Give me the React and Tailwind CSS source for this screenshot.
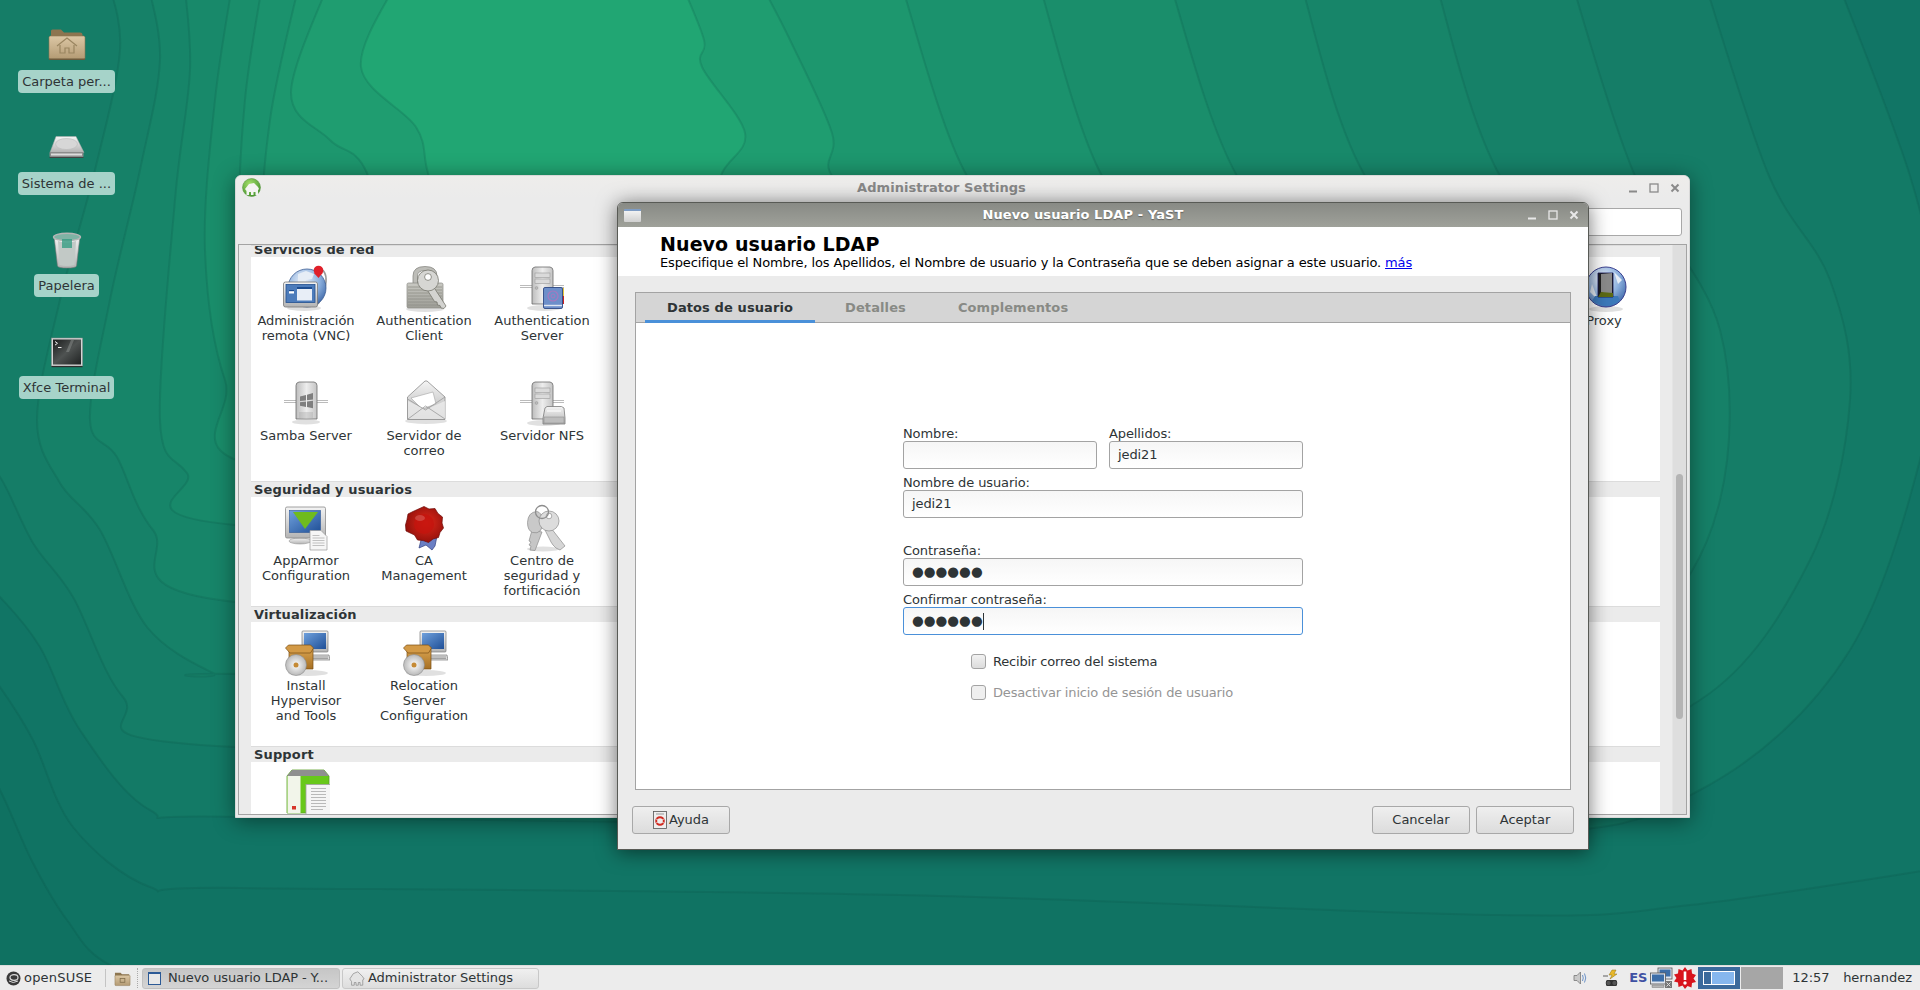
import React from "react";

/* ---------- wallpaper ---------- */
function smooth(pts) {
  let d = `M${pts[0][0]},${pts[0][1]}`;
  for (let i = 0; i < pts.length - 1; i++) {
    const p0 = pts[Math.max(0, i - 1)], p1 = pts[i], p2 = pts[i + 1], p3 = pts[Math.min(pts.length - 1, i + 2)];
    const c1 = [p1[0] + (p2[0] - p0[0]) / 6, p1[1] + (p2[1] - p0[1]) / 6];
    const c2 = [p2[0] - (p3[0] - p1[0]) / 6, p2[1] - (p3[1] - p1[1]) / 6];
    d += ` C${c1[0].toFixed(1)},${c1[1].toFixed(1)} ${c2[0].toFixed(1)},${c2[1].toFixed(1)} ${p2[0]},${p2[1]}`;
  }
  return d;
}
const layers = [
  { c: "#107363", tail: "L1960,-20 L-30,-20 Z", p: [[-30, 740], [0, 790], [33, 863], [67, 920], [110, 965], [220, 1000], [1960, 1000]] },
  { c: "#117565", tail: "L1960,-20 L-30,-20 Z", p: [[-30, 650], [0, 687], [33, 740], [73, 827], [150, 887], [240, 888], [900, 895], [1500, 915], [1690, 905], [1960, 865]] },
  { c: "#137a66", tail: "L-30,-20 Z", p: [[-30, 570], [0, 597], [40, 647], [80, 730], [150, 810], [240, 817], [900, 825], [1500, 835], [1700, 790], [1850, 650], [1930, 420], [1935, 300], [1910, 176], [1837, -20]] },
  { c: "#157d67", tail: "L-30,-20 Z", p: [[-30, 450], [0, 477], [33, 543], [73, 597], [123, 697], [200, 745], [900, 755], [1500, 760], [1700, 700], [1810, 560], [1850, 400], [1830, 280], [1769, 176], [1704, -20]] },
  { c: "#168168", tail: "Z", p: [[108, -20], [120, 50], [95, 170], [60, 300], [37, 420], [60, 483], [100, 530], [147, 627], [213, 673], [240, 674], [900, 680], [1500, 680], [1650, 620], [1720, 500], [1720, 330], [1635, 176], [1571, -20]] },
  { c: "#178569", tail: "Z", p: [[147, -20], [160, 60], [140, 170], [110, 300], [90, 420], [117, 457], [153, 530], [235, 602], [900, 610], [1450, 600], [1600, 500], [1630, 330], [1500, 176], [1435, -20]] },
  { c: "#18896a", tail: "Z", p: [[184, -20], [190, 70], [175, 200], [160, 420], [187, 473], [235, 525], [900, 540], [1400, 520], [1500, 330], [1365, 176], [1300, -20]] },
  { c: "#1a8e6b", tail: "Z", p: [[233, -20], [215, 100], [205, 250], [225, 380], [280, 470], [900, 470], [1300, 450], [1350, 300], [1237, 176], [1169, -20]] },
  { c: "#1b926d", tail: "Z", p: [[263, -20], [245, 100], [240, 230], [260, 330], [300, 420], [900, 420], [1200, 400], [1200, 280], [1102, 176], [1038, -20]] },
  { c: "#1d976e", tail: "Z", p: [[300, -20], [270, 120], [265, 240], [300, 350], [600, 380], [1000, 350], [1060, 260], [967, 176], [900, -20]] },
  { c: "#1f9d70", tail: "Z", p: [[330, -20], [291, 93], [330, 140], [367, 173], [400, 300], [800, 300], [900, 240], [832, 176], [832, 133], [790, 40], [759, -20]] },
  { c: "#21a673", tail: "Z", p: [[398, -20], [361, 67], [416, 127], [428, 173], [450, 240], [600, 260], [700, 230], [722, 173], [745, 133], [702, 67], [704, 40], [680, -20]] },
];
function Wallpaper() {
  return (
    <svg className="absolute inset-0" width="1920" height="990" viewBox="0 0 1920 990">
      <rect width="1920" height="990" fill="#0f7161" />
      {layers.map((l, i) => (
        <path key={i} d={smooth(l.p) + " " + l.tail} fill={l.c} stroke="#0a4f40" strokeOpacity="0.18" strokeWidth="2" />
      ))}
    </svg>
  );
}

/* ---------- shared gradients ---------- */
function Defs() {
  return (
    <svg className="absolute w-0 h-0">
      <defs>
        <linearGradient id="gGray" x1="0" y1="0" x2="0" y2="1"><stop offset="0" stopColor="#f4f4f4" /><stop offset="1" stopColor="#b4b4b4" /></linearGradient>
        <linearGradient id="gGrayH" x1="0" y1="0" x2="1" y2="0"><stop offset="0" stopColor="#bdbdbd" /><stop offset=".5" stopColor="#ededed" /><stop offset="1" stopColor="#c4c4c4" /></linearGradient>
        <linearGradient id="gLock" x1="0" y1="0" x2="0" y2="1"><stop offset="0" stopColor="#c9c9c3" /><stop offset="1" stopColor="#9d9d96" /></linearGradient>
        <linearGradient id="gScreen" x1="0" y1="0" x2="1" y2="1"><stop offset="0" stopColor="#6fa0dc" /><stop offset="1" stopColor="#1f4f97" /></linearGradient>
        <linearGradient id="gBox" x1="0" y1="0" x2="0" y2="1"><stop offset="0" stopColor="#d9a350" /><stop offset="1" stopColor="#a66f22" /></linearGradient>
        <linearGradient id="gFolder" x1="0" y1="0" x2="0" y2="1"><stop offset="0" stopColor="#dcc7a5" /><stop offset="1" stopColor="#b39a73" /></linearGradient>
        <radialGradient id="gGlobe" cx=".4" cy=".3" r=".8"><stop offset="0" stopColor="#eef3fa" /><stop offset=".55" stopColor="#8cb0de" /><stop offset="1" stopColor="#2f5a9d" /></radialGradient>
        <radialGradient id="gSeal" cx=".55" cy=".45" r=".6"><stop offset="0" stopColor="#e0281a" /><stop offset="1" stopColor="#8f0f0a" /></radialGradient>
        <radialGradient id="gCD" cx=".5" cy=".5" r=".5"><stop offset="0" stopColor="#fff" /><stop offset="1" stopColor="#b9b9b9" /></radialGradient>
        <linearGradient id="gTerm" x1="0" y1="0" x2="1" y2="1"><stop offset="0" stopColor="#1a1c1c" /><stop offset=".5" stopColor="#4f5352" /><stop offset="1" stopColor="#1f2222" /></linearGradient>
        <radialGradient id="gGreen" cx=".4" cy=".3" r=".8"><stop offset="0" stopColor="#a4de6a" /><stop offset="1" stopColor="#3f8f2a" /></radialGradient>
      </defs>
    </svg>
  );
}

/* ---------- 48px application icons ---------- */
const Ico = ({ children, s = 48, v = 48 }) => (
  <svg width={s} height={s} viewBox={`0 0 ${v} ${v}`} className="block shrink-0">{children}</svg>
);
const Shadow = ({ cx = 24, cy = 44, rx = 18, ry = 3 }) => <ellipse cx={cx} cy={cy} rx={rx} ry={ry} fill="#000" opacity=".12" />;

function Tower({ windows, bays = true }) {
  return (
    <g>
      <path d="M2 21.5h44M2 23.5h44" stroke="#bbb" strokeWidth="1" />
      <path d="M14 6.5q0-3 3-3.5h15q3 .5 3 3.5V40H14z" fill="url(#gGrayH)" stroke="#6b6b6b" strokeWidth=".8" />
      {bays && <rect x="17" y="9" width="15" height="4.5" fill="#dadada" stroke="#999" strokeWidth=".6" />}
      {bays && <rect x="17" y="15" width="15" height="4.5" fill="#dadada" stroke="#999" strokeWidth=".6" />}
      {bays && <circle cx="18.5" cy="24" r="1.4" fill="#bbb" stroke="#888" strokeWidth=".4" />}
      {windows && (
        <g fill="#7f7f7f">
          <path d="M18 17.5l6-1.5v5.5l-6 .6zM25 15.7l6-1.7v6.5l-6 .8zM18 23.2l6-.6v5.5l-6-1.3zM25 22.5l6-.8v7.6l-6-1.2z" />
          <path d="M18 33v6M20 33v6M22 33v6M24 33v6M26 33v6M28 33v6M30 33v6" stroke="#a5a5a5" strokeWidth=".7" />
        </g>
      )}
    </g>
  );
}
const IcVnc = () => (
  <Ico>
    <Shadow cx="22" cy="44" rx="17" />
    <path d="M36 4q9 2 8 14t-8 22" fill="none" stroke="#9a9a9a" strokeWidth="1.6" />
    <circle cx="25" cy="24" r="19" fill="url(#gGlobe)" stroke="#3c5d93" strokeWidth=".8" />
    <path d="M16 10l8-3 8 3-2 5-6 1-3 4-5-2zM30 22l6 2-2 7-4-2z" fill="#e6edf6" />
    <rect x="1.5" y="18" width="34" height="25" rx="2" fill="url(#gGray)" stroke="#777" strokeWidth=".8" />
    <rect x="4" y="20.5" width="29" height="18" fill="#4d7cbb" stroke="#23508f" strokeWidth=".8" />
    <rect x="15" y="23" width="15" height="13.5" fill="#e8eef7" />
    <rect x="15" y="23" width="15" height="2" fill="#1e4e92" />
    <rect x="7" y="26" width="5" height="3.5" fill="#fff" />
    <rect x="7" y="26" width="5" height="1.2" fill="#1e4e92" />
    <circle cx="36.5" cy="6.5" r="4.8" fill="#e0202a" />
    <path d="M32 9l4.5 5 4-5z" fill="#e0202a" />
  </Ico>
);
const IcLock = () => (
  <Ico>
    <Shadow cx="25" cy="45" rx="19" />
    <path d="M13 20V12q0-9.5 12-9.5T37 12v8h-4.5v-8q0-5.5-7.5-5.5T17.500 12v8z" fill="#bdbdb8" stroke="#8a8a85" strokeWidth=".8" />
    <rect x="7" y="19" width="36" height="25" rx="1.500" fill="url(#gLock)" stroke="#8a8a85" strokeWidth=".7" />
    <path d="M8 23h34M8 26h34M8 29h34M8 32h34M8 35h34M8 38h34M8 41h34" stroke="#8f8f89" strokeWidth=".8" />
    <path d="M33 22l13 20-2 2.500-3-.5-1-2.500-2.500-.5-.5-3-2.500-.5L26 24z" fill="#d3d3d0" stroke="#77776f" strokeWidth=".8" />
    <circle cx="28" cy="16.500" r="10.500" fill="#d6d6d3" stroke="#77776f" strokeWidth=".8" />
    <circle cx="28" cy="13" r="3.400" fill="#fff" stroke="#77776f" strokeWidth=".8" />
  </Ico>
);
const IcAuthSrv = () => (
  <Ico>
    <Shadow cx="26" cy="44" rx="17" />
    <Tower />
    <rect x="42" y="24" width="4" height="8" fill="#e5c43a" />
    <rect x="42" y="32" width="4" height="8" fill="#cc2222" />
    <rect x="25.500" y="23.500" width="19" height="21" rx="1.500" fill="#6d8fca" stroke="#2f4a85" strokeWidth=".9" />
    <path d="M26 41.500h18" stroke="#dfe6f2" strokeWidth="1.400" />
    <circle cx="35" cy="32" r="5" fill="none" stroke="#a878bf" strokeWidth="1.200" />
    <circle cx="35" cy="32" r="2" fill="none" stroke="#a878bf" strokeWidth="1" />
  </Ico>
);
const IcSamba = () => (
  <Ico>
    <Shadow cx="24" cy="43" rx="14" ry="2.500" />
    <Tower windows bays={false} />
  </Ico>
);
const IcMail = () => (
  <Ico>
    <Shadow cx="26" cy="42" rx="21" />
    <path d="M7.500 18L25 2l2 0 18 16v22.500H7.500z" fill="url(#gGray)" stroke="#8b8b8b" strokeWidth=".8" />
    <path d="M11 19l22-6 3 12-14 5z" fill="#fff" stroke="#a5a5a5" strokeWidth=".6" />
    <path d="M8 22l17.500 8.500L45 22v18H8z" fill="#ececec" opacity=".8" />
    <path d="M7.500 20l18 11 19.500-13" fill="none" stroke="#9a9a9a" strokeWidth=".8" />
    <path d="M8 40L25.500 27 45 40" fill="none" stroke="#9b9b9b" strokeWidth=".8" />
  </Ico>
);
const IcNfs = () => (
  <Ico>
    <Shadow cx="26" cy="44" rx="17" />
    <Tower />
    <path d="M27 29l2-1.500h14.500l2.500 1.500 1 10v6H25v-6z" fill="url(#gGray)" stroke="#7b7b7b" strokeWidth=".8" />
    <rect x="26" y="38" width="20" height="6" fill="#bdbdbd" stroke="#888" strokeWidth=".5" />
    <path d="M29 32h14" stroke="#fff" strokeWidth="1" />
  </Ico>
);
const IcAppArmor = () => (
  <Ico>
    <ellipse cx="18" cy="37" rx="11" ry="3" fill="url(#gGray)" stroke="#888" strokeWidth=".5" />
    <rect x="3.500" y="3" width="40" height="31" rx="1.500" fill="url(#gGray)" stroke="#8a8a8a" strokeWidth=".8" />
    <rect x="7.500" y="6.500" width="31" height="22" fill="url(#gScreen)" stroke="#2c5594" strokeWidth=".6" />
    <path d="M11 8h25L23 25z" fill="#6fbb1e" />
    <path d="M28 26.500h11l6 6V46H28z" fill="#f6f6f6" stroke="#999" strokeWidth=".7" />
    <path d="M30.500 34h12M30.500 36.500h12M30.500 39h12M30.500 41.500h12M30.500 31.500h7" stroke="#aaa" strokeWidth=".7" />
  </Ico>
);
const IcCA = () => (
  <Ico>
    <path d="M22 32l-3 12 7-3 6 5 3-4 2-10z" fill="#6a7fc4" stroke="#2f3f80" strokeWidth=".7" />
    <path d="M24 2.500l5 2.500 6-.5 3 5 4.500 3.500-.5 6 1.500 5-3.500 4.500-1.500 5-5.500 1.500-4.500 3.500-5.500-2-5.500-.5-3-5L6 27l-.5-6L7 15.500 8 10l5-2.500z" fill="url(#gSeal)" stroke="#6e0c08" strokeWidth=".7" />
    <circle cx="24" cy="20" r="10" fill="#c4140e" opacity=".8" />
    <ellipse cx="20" cy="14" rx="5" ry="3" fill="#fff" opacity=".18" />
  </Ico>
);
const IcKeys = () => (
  <Ico>
    <Shadow cx="25" cy="45" rx="16" ry="2.500" />
    <path d="M14 26l-3 11 2 1-2 3 2 1-1 4 5 .5L24 28z" fill="#c6c6c6" stroke="#8d8d8d" strokeWidth=".7" />
    <path d="M19 7.500q-9 .5-9.500 11 0 8 5 10 5 1.500 8-2 3-4 2-11-1-7-5.500-8z" fill="#c9c9c9" stroke="#8d8d8d" strokeWidth=".7" />
    <path d="M33 24l14 18-5 4-4-2-3-3-2-3-6-12z" fill="#d6d6d6" stroke="#8d8d8d" strokeWidth=".7" />
    <circle cx="31" cy="17" r="10" fill="#dcdcdc" stroke="#8d8d8d" strokeWidth=".7" />
    <circle cx="31" cy="12" r="2.800" fill="#fff" stroke="#8d8d8d" strokeWidth=".7" />
    <circle cx="24" cy="8" r="6.500" fill="none" stroke="#8d8d8d" strokeWidth="1.300" />
  </Ico>
);
const IcHyper = () => (
  <Ico>
    <Shadow cx="26" cy="44" rx="20" />
    <rect x="20" y="2" width="26" height="21" rx="1" fill="url(#gGray)" stroke="#7b7b7b" strokeWidth=".7" />
    <rect x="22" y="4" width="22" height="16" fill="url(#gScreen)" />
    <path d="M30 26h17l1 5H29z" fill="#dcdcdc" stroke="#7b7b7b" strokeWidth=".7" />
    <path d="M31 28h15M31 29.500h15" stroke="#888" strokeWidth=".7" />
    <path d="M7 20h24v20H7z" fill="url(#gBox)" stroke="#7a4e14" strokeWidth=".7" />
    <path d="M3.500 19l3-3h22l3 3-3 5H8z" fill="#d39a46" stroke="#7a4e14" strokeWidth=".7" />
    <circle cx="14" cy="36" r="10.500" fill="url(#gCD)" stroke="#8a8a8a" strokeWidth=".6" />
    <circle cx="14" cy="36" r="2.500" fill="#c58a35" />
  </Ico>
);
const IcSupport = () => (
  <Ico>
    <path d="M5 7l5-6h32l5 6v37H5z" fill="#68c81a" stroke="#5a9e27" strokeWidth=".8" />
    <path d="M5 7l5-6h32l5 6z" fill="#8f8f8f" />
    <rect x="5.500" y="7" width="13" height="37" fill="#f2f5ea" />
    <path d="M10 37h4v3.500h-4z" fill="#d7372b" />
    <rect x="24" y="15.500" width="24.500" height="30" fill="#f5f5f5" stroke="#a0a0a0" strokeWidth=".8" />
    <path d="M29 19.500h15M29 22.500h15M29 25.500h15M29 28.500h15M29 31.500h15M29 34.500h15M29 37.500h15M29 40.500h12" stroke="#aaa" strokeWidth=".8" />
  </Ico>
);
const IcProxy = () => (
  <Ico>
    <Shadow cx="26" cy="45" rx="17" />
    <circle cx="26" cy="23" r="20" fill="url(#gGlobe)" stroke="#3a3f8f" strokeWidth="1" />
    <path d="M18 36l-8-8 2-8zM34 8l8 8-4 4z" fill="#e6edf6" />
    <path d="M12 37q14 10 28 0l-2-5H15z" fill="#3c79ba" />
    <path d="M18 9h15v24H18z" fill="#202020" stroke="#101050" strokeWidth=".8" />
    <path d="M21 10l11-1v23l-11-4z" fill="#8a8a8a" />
    <path d="M18 33h15v-4l-12-1z" fill="#5d6a15" />
  </Ico>
);

/* ---------- desktop icons ---------- */
const DFolder = () => (
  <svg width="48" height="48" viewBox="0 0 48 48" className="block translate-y-[2px]">
    <path d="M8 10q0-1.500 1.500-1.500h8.500l3 3h16q2.500 0 2.500 2V20H8z" fill="#8d7550" />
    <path d="M7 15h34l1 1v21q0 1.500-2 1.500H8q-2 0-2-1.500V16z" fill="url(#gFolder)" stroke="#8d7550" strokeWidth=".6" />
    <path d="M14 25L24 17l10 8M17 24v8h5v-5h4v5h5v-8" fill="none" stroke="#9a8560" strokeWidth="1.200" />
    <rect x="6" y="37.500" width="36" height="1.500" fill="#6d5a3c" />
  </svg>
);
const DDisk = () => (
  <svg width="48" height="48" viewBox="0 0 48 48" className="block translate-y-[3px]">
    <path d="M13 12.500h20l8 16H7z" fill="url(#gGray)" stroke="#aaa" strokeWidth=".5" />
    <ellipse cx="23.500" cy="20" rx="11" ry="5.500" fill="#d7d7d7" stroke="#bbb" strokeWidth=".6" />
    <rect x="6.500" y="28" width="34" height="5" rx="1" fill="#8c8c8c" />
    <rect x="8" y="29.500" width="31" height="2" fill="#dcdcdc" />
    <rect x="6.500" y="33" width="34" height="1" fill="#444" />
  </svg>
);
const DTrash = () => (
  <svg width="48" height="48" viewBox="0 0 48 48" className="block translate-y-[4px]">
    <path d="M11 9l3.500 30q1 2 9.500 2t9.500-2L37 9z" fill="url(#gGray)" stroke="#777" strokeWidth=".6" />
    <path d="M15 14q9 3 18 0l-1.500 24q-7.500 2-15 0z" fill="#c2c9c6" />
    <ellipse cx="24" cy="10" rx="13.500" ry="3.800" fill="#7fb3a5" stroke="#b5b5b5" strokeWidth="1.400" />
    <rect x="19" y="12" width="10" height="9" fill="#2f9b80" opacity=".75" />
  </svg>
);
const DTerm = () => (
  <svg width="48" height="48" viewBox="0 0 48 48" className="block translate-y-[2px]">
    <rect x="8.500" y="11" width="31" height="28" fill="#d4d4d4" stroke="#8d8d8d" strokeWidth=".5" />
    <rect x="10" y="12.500" width="28" height="25" fill="url(#gTerm)" />
    <path d="M12 14.500l2.500 1.800-2.500 1.800M15 20.500h3.500" stroke="#eee" strokeWidth="1" fill="none" />
    <path d="M28 13l-5 12h3l5-12z" fill="#8b8f8d" opacity=".5" />
    <rect x="8.500" y="39" width="31" height="1.200" fill="#2d2d2d" />
  </svg>
);
function DesktopItem({ icon, label }) {
  return (
    <div className="h-[102px] flex flex-col items-center">
      <div className="h-[46px] mb-[4px] flex items-center justify-center">{icon}</div>
      <div className="h-[23px] px-[4px] flex items-center rounded-[4px] bg-[#a6d3c9] text-[13px] leading-none text-[#2e3436] whitespace-nowrap">{label}</div>
    </div>
  );
}

/* ---------- window controls ---------- */
const Controls = ({ color, gap }) => (
  <div className="flex items-center" style={{ gap }}>
    <svg width="10" height="10" viewBox="0 0 10 10"><rect x="1" y="7.500" width="8" height="2" fill={color} /></svg>
    <svg width="10" height="10" viewBox="0 0 10 10"><rect x="1" y="1" width="8" height="8" fill="none" stroke={color} strokeWidth="1.300" /></svg>
    <svg width="10" height="10" viewBox="0 0 10 10"><path d="M1.500 1.500l7 7M8.500 1.500l-7 7" stroke={color} strokeWidth="2" /></svg>
  </div>
);

/* ---------- admin settings ---------- */
const Item = ({ icon, lines, className = "" }) => (
  <div className={`flex flex-col items-center w-[110px] ${className}`}>
    <div className="h-[48px] flex justify-center">{icon}</div>
    <div className="mt-[1px] text-[13px] leading-[15px] text-center text-[#2e3436] whitespace-nowrap">
      {lines.map((t) => <div key={t}>{t}</div>)}
    </div>
  </div>
);
const Section = ({ title, h = 16, children, height }) => (
  <div className="shrink-0">
    <div className="border-t border-[#dcdcdc] flex items-end pl-[3px] bg-[#ebebeb] overflow-hidden" style={{ height: h }}>
      <span className="text-[13px] font-bold leading-[15px] tracking-[0.15px] text-[#2e3436] whitespace-nowrap">{title}</span>
    </div>
    <div className="bg-white pt-[7px] grid grid-cols-[repeat(12,110px)] gap-x-2 auto-rows-[115px] overflow-hidden" style={{ height }}>
      {children}
    </div>
  </div>
);
function AdminWindow() {
  return (
    <div className="absolute left-[235px] top-[175px] w-[1455px] h-[643px] bg-[#ebebeb] rounded-t-[6px] border border-[#d8d8d8] shadow-[0_3px_22px_rgba(0,0,0,0.45)] flex flex-col overflow-hidden">
      <div className="h-[68px] shrink-0 relative">
        <div className="h-[23px] flex items-center justify-between pl-[6px] pr-[9px] bg-gradient-to-b from-[#eeedeb] to-[#ebebeb]">
          <svg width="19" height="19" viewBox="0 0 19 19">
            <circle cx="9.500" cy="9.500" r="9" fill="url(#gGreen)" stroke="#4f8f33" strokeWidth=".5" />
            <path d="M3 11l4-5 5-1 4 4 1 2-1 1v5h-2.500v-3h-2v3H9v-3H7v3H4.500v-4z" fill="#f4f4f2" />
          </svg>
          <span className="mr-[6px] text-[13px] font-bold text-[#888888] tracking-[0.05px]">Administrator Settings</span>
          <Controls color="#8a8a8a" gap="11px" />
        </div>
        <div className="flex justify-end pr-[7px] mt-[9px]">
          <div className="w-[500px] h-[28px] bg-white border border-[#a8a8a8] rounded-[3px]" />
        </div>
      </div>
      <div className="mx-[2px] mb-[2px] flex-1 min-h-0 border border-[#a3a3a3] flex bg-[#ebebeb]">
        <div className="flex-1 min-w-0 pl-[12px] pr-[12px] flex flex-col overflow-hidden">
          <Section title="Servicios de red" h={12} height={224}>
            <Item icon={<IcVnc />} lines={["Administración", "remota (VNC)"]} />
            <Item icon={<IcLock />} lines={["Authentication", "Client"]} />
            <Item icon={<IcAuthSrv />} lines={["Authentication", "Server"]} />
            <Item icon={<IcProxy />} lines={["Proxy"]} className="col-start-12" />
            <Item icon={<IcSamba />} lines={["Samba Server"]} className="row-start-2" />
            <Item icon={<IcMail />} lines={["Servidor de", "correo"]} className="row-start-2" />
            <Item icon={<IcNfs />} lines={["Servidor NFS"]} className="row-start-2" />
          </Section>
          <Section title="Seguridad y usuarios" height={109}>
            <Item icon={<IcAppArmor />} lines={["AppArmor", "Configuration"]} />
            <Item icon={<IcCA />} lines={["CA", "Management"]} />
            <Item icon={<IcKeys />} lines={["Centro de", "seguridad y", "fortificación"]} />
          </Section>
          <Section title="Virtualización" height={124}>
            <Item icon={<IcHyper />} lines={["Install", "Hypervisor", "and Tools"]} />
            <Item icon={<IcHyper />} lines={["Relocation", "Server", "Configuration"]} />
          </Section>
          <Section title="Support" height={60}>
            <Item icon={<IcSupport />} lines={[""]} />
          </Section>
        </div>
        <div className="w-[14px] shrink-0 bg-[#dedede] border-l border-[#e4e4e4] relative">
          <div className="absolute left-[3px] top-[229px] w-[7px] h-[245px] rounded-full bg-[#b4b4b4]" />
        </div>
      </div>
    </div>
  );
}

/* ---------- dialog ---------- */
const Entry = ({ children, focus, className = "" }) => (
  <div className={`h-[28px] flex items-center px-[8px] rounded-[3px] border bg-gradient-to-b from-[#f6f6f6] to-white text-[13px] tracking-[-0.1px] text-[#2e3436] ${focus ? "border-[#4a90d9]" : "border-[#a3a3a3]"} ${className}`}>
    {children}
  </div>
);
const Lbl = ({ children, className = "" }) => (
  <div className={`h-[15px] text-[13px] leading-[15px] tracking-[-0.1px] text-[#2e3436] whitespace-nowrap ${className}`}>{children}</div>
);
const Dots = () => <span className="text-[13.5px] leading-none tracking-[0px]">●●●●●●</span>;
const Check = ({ children, disabled, className = "" }) => (
  <div className={`flex items-center h-[15px] pl-[68px] ${className}`}>
    <div className={`w-[15px] h-[15px] rounded-[3px] border border-[#a3a3a3] bg-gradient-to-b ${disabled ? "from-[#efefef] to-[#efefef]" : "from-[#f2f2f2] to-[#dcdcdc]"}`} />
    <span className={`ml-[7px] text-[13px] leading-[15px] tracking-[-0.17px] ${disabled ? "text-[#959595]" : "text-[#2e3436]"}`}>{children}</span>
  </div>
);
const Btn = ({ children, className = "" }) => (
  <div className={`h-[28px] w-[98px] flex items-center justify-center rounded-[3px] border border-[#a8a8a8] bg-gradient-to-b from-[#efefef] to-[#dcdcdc] text-[13px] text-[#2e3436] ${className}`}>{children}</div>
);
function Dialog() {
  return (
    <div className="absolute left-[617px] top-[202px] w-[972px] h-[648px] rounded-t-[6px] border border-[#585a55] bg-[#ebebeb] shadow-[0_2px_20px_rgba(0,0,0,0.55)] flex flex-col overflow-hidden">
      <div className="h-[24px] shrink-0 flex items-center justify-between pl-[6px] pr-[9px] bg-gradient-to-b from-[#888a85] to-[#9fa19a]">
        <div className="w-[17px] h-[13px] rounded-[1px] bg-gradient-to-b from-[#f2f2f2] to-[#d0d0d0] border-t-[2px] border-[#7e9cc4]" />
        <span className="mr-[2px] text-[13px] font-bold text-white tracking-[0.1px] [text-shadow:0_1px_1px_rgba(0,0,0,0.35)]">Nuevo usuario LDAP - YaST</span>
        <Controls color="#e8e8e8" gap="11px" />
      </div>
      <div className="h-[49px] shrink-0 bg-white pl-[42px] flex flex-col justify-start pt-[6px]">
        <div className="text-[19px] font-bold leading-[22px] text-black tracking-[0.1px]">Nuevo usuario LDAP</div>
        <div className="text-[13px] leading-[15px] tracking-[-0.13px] text-black whitespace-nowrap">
          Especifique el Nombre, los Apellidos, el Nombre de usuario y la Contraseña que se deben asignar a este usuario. <a className="text-[#0000ee] underline">más</a>
        </div>
      </div>
      <div className="mt-[16px] ml-[17px] mr-[17px] h-[498px] shrink-0 border border-[#a3a3a3] bg-white flex flex-col">
        <div className="h-[30px] shrink-0 bg-[#d5d5d5] border-b border-[#a3a3a3] flex pl-[9px] gap-[8px]">
          <div className="h-[30px] px-[22px] flex items-center border-b-[3px] border-[#4a90d9] pt-[3px] text-[13px] font-bold tracking-[0.1px] text-[#2e3436]">Datos de usuario</div>
          <div className="h-[30px] px-[22px] flex items-center text-[13px] font-bold tracking-[0.1px] text-[#888a85]">Detalles</div>
          <div className="h-[30px] px-[22px] flex items-center text-[13px] font-bold tracking-[0.1px] text-[#888a85]">Complementos</div>
        </div>
        <div className="w-[400px] mx-auto pt-[103px]">
          <div className="grid grid-cols-2 gap-x-[12px]">
            <div><Lbl>Nombre:</Lbl><Entry /></div>
            <div><Lbl>Apellidos:</Lbl><Entry>jedi21</Entry></div>
          </div>
          <Lbl className="mt-[6px]">Nombre de usuario:</Lbl>
          <Entry>jedi21</Entry>
          <Lbl className="mt-[25px]">Contraseña:</Lbl>
          <Entry><Dots /></Entry>
          <Lbl className="mt-[6px]">Confirmar contraseña:</Lbl>
          <Entry focus><Dots /><span className="w-px h-[17px] bg-[#2e3436]" /></Entry>
          <Check className="mt-[19px]">Recibir correo del sistema</Check>
          <Check disabled className="mt-[16px]">Desactivar inicio de sesión de usuario</Check>
        </div>
      </div>
      <div className="flex items-start justify-between px-[14px] pt-[16px]">
        <Btn className="gap-[2px]">
          <svg width="14" height="18" viewBox="0 0 14 18">
            <rect x=".5" y=".5" width="13" height="17" fill="#eee" stroke="#555" strokeWidth=".8" />
            <path d="M3 3h8" stroke="#999" />
            <circle cx="7" cy="10" r="3.800" fill="none" stroke="#d02a20" strokeWidth="2" />
            <path d="M3 8l8 4M11 8l-8 4" stroke="#eee" strokeWidth=".7" />
          </svg>
          <span>Ayuda</span>
        </Btn>
        <div className="flex gap-[6px]">
          <Btn>Cancelar</Btn>
          <Btn>Aceptar</Btn>
        </div>
      </div>
    </div>
  );
}

/* ---------- taskbar ---------- */
function TaskBar() {
  return (
    <div className="h-[25px] shrink-0 bg-[#ececec] border-t border-[#dcdcdc] flex items-center text-[13px] text-[#2e3436] relative">
      <div className="flex items-center pl-[6px] w-[105px]">
        <svg width="15" height="15" viewBox="0 0 15 15">
          <circle cx="7.500" cy="7.500" r="7" fill="#3a3a3a" />
          <ellipse cx="8" cy="6.500" rx="4" ry="2.800" fill="none" stroke="#ddd" strokeWidth="1.200" />
          <path d="M3 10q4 3 9 0" fill="none" stroke="#ddd" strokeWidth="1" />
        </svg>
        <span className="ml-[3px] tracking-[0.2px]">openSUSE</span>
      </div>
      <div className="w-px h-[18px] bg-[#c4c4c4]" />
      <svg className="ml-[8px]" width="17" height="17" viewBox="0 0 18 18">
        <path d="M1 3h6l1.500 1.500H16V7H1z" fill="#8d7550" />
        <rect x="1" y="5.500" width="16" height="11" rx="1" fill="url(#gFolder)" stroke="#8d7550" strokeWidth=".5" />
        <rect x="6.500" y="9" width="5" height="4" fill="none" stroke="#7d6a48" strokeWidth=".8" />
      </svg>
      <div className="ml-[6px] h-[20px] border-l border-dotted border-[#aaa]" />
      <div className="ml-[4px] w-[198px] h-[21px] flex items-center pl-[5px] rounded-[3px] border border-[#c0c0c0] bg-gradient-to-b from-[#c6c6c6] to-[#d4d4d4]">
        <div className="w-[13px] h-[13px] border border-[#2c5a96] border-t-[2px] bg-[#e8e8e8]" />
        <span className="ml-[7px] tracking-[-0.1px] whitespace-nowrap">Nuevo usuario LDAP - Y...</span>
      </div>
      <div className="ml-[2px] w-[197px] h-[21px] flex items-center pl-[5px] rounded-[3px] border border-[#c8c8c8] bg-gradient-to-b from-[#f0f0f0] to-[#dddddd]">
        <svg width="17" height="17" viewBox="0 0 19 19">
          <path d="M2 10l4-6 5-2 5 5 2 3-1.500 1v6h-3v-3h-2v3H9v-3H7v3H4v-4z" fill="#e4e4e4" stroke="#8a8a8a" strokeWidth=".8" />
        </svg>
        <span className="ml-[3px] tracking-[-0.05px] whitespace-nowrap">Administrator Settings</span>
      </div>
      <div className="flex-1" />
      <svg width="15" height="16" viewBox="0 0 15 16">
        <path d="M1 5.500h3l3.500-3.500v12L4 10.500H1z" fill="#c9c9c9" stroke="#777" strokeWidth=".8" />
        <path d="M9.500 5q1.500 3 0 6M11.500 3.500q2.500 4.500 0 9" fill="none" stroke="#6b92c7" strokeWidth="1" />
      </svg>
      <svg className="ml-[15px]" width="17" height="18" viewBox="0 0 17 18">
        <path d="M9 1L6 6h3L7 10l7-5h-3l2-4z" fill="#e8b82a" stroke="#8f7010" strokeWidth=".5" />
        <path d="M0 7h5" stroke="#777" strokeWidth="1.200" />
        <rect x="3" y="11" width="11" height="6" rx="1.500" fill="#333" />
        <circle cx="5.500" cy="14" r="2.500" fill="#555" stroke="#222" strokeWidth=".5" />
        <circle cx="11.500" cy="14" r="2.500" fill="#555" stroke="#222" strokeWidth=".5" />
      </svg>
      <span className="ml-[9px] w-[17px] text-[13px] font-bold text-[#3f51a3]">ES</span>
      <svg className="ml-[4px]" width="23" height="22" viewBox="0 0 23 22">
        <rect x="8" y="1" width="14" height="11" fill="#dfe5ee" stroke="#555" strokeWidth=".8" />
        <rect x="9.500" y="2.500" width="11" height="7" fill="#3d6ea8" />
        <rect x="0.500" y="6" width="15" height="11" fill="#dfe5ee" stroke="#555" strokeWidth=".8" />
        <rect x="2" y="7.500" width="12" height="7" fill="#3d6ea8" />
        <rect x="2" y="18" width="12" height="2.500" fill="#b5b5b5" stroke="#666" strokeWidth=".4" />
        <rect x="15" y="14" width="7" height="7" fill="#777" />
        <path d="M16.500 15.500l4 4M20.500 15.500l-4 4" stroke="#ddd" strokeWidth="1" />
      </svg>
      <svg className="ml-[1px]" width="22" height="22" viewBox="0 0 22 22">
        <path d="M11 0l2.500 3.500 4-1.500.5 4.500 4 1.500-2.500 3.500 2.500 3.500-4 1-.5 4.500-4-1.500L11 22l-2.500-3.500-4 1.500L4 15.500 0 14.500 2.500 11 0 7.500l4-1L4.500 2l4 1.500z" fill="#d8141c" />
        <rect x="9.700" y="4.500" width="2.600" height="8.500" fill="#fff" />
        <circle cx="11" cy="16" r="1.700" fill="#fff" />
      </svg>
      <div className="ml-[2px] w-[42px] h-[22px] bg-[#3b6a9c] flex items-center justify-center">
        <div className="w-[32px] h-[14px] border border-white flex">
          <div className="w-[7px] bg-[#3b6a9c]" />
          <div className="flex-1 bg-[#86b7ee] border-l border-white" />
        </div>
      </div>
      <div className="ml-[1px] w-[42px] h-[22px] bg-[#a6a6a6]" />
      <span className="ml-[9px] w-[35px] whitespace-nowrap">12:57</span>
      <span className="ml-[16px] mr-[8px] whitespace-nowrap">hernandez</span>
    </div>
  );
}

export default function App() {
  return (
    <div className="relative w-[1920px] h-[990px] overflow-hidden flex flex-col font-['DejaVu_Sans',sans-serif]">
      <Defs />
      <Wallpaper />
      <div className="relative flex-1 min-h-0">
        <div className="absolute left-0 top-[20px] w-[133px]">
          <DesktopItem icon={<DFolder />} label="Carpeta per..." />
          <DesktopItem icon={<DDisk />} label="Sistema de ..." />
          <DesktopItem icon={<DTrash />} label="Papelera" />
          <DesktopItem icon={<DTerm />} label="Xfce Terminal" />
        </div>
        <AdminWindow />
        <Dialog />
      </div>
      <TaskBar />
    </div>
  );
}
